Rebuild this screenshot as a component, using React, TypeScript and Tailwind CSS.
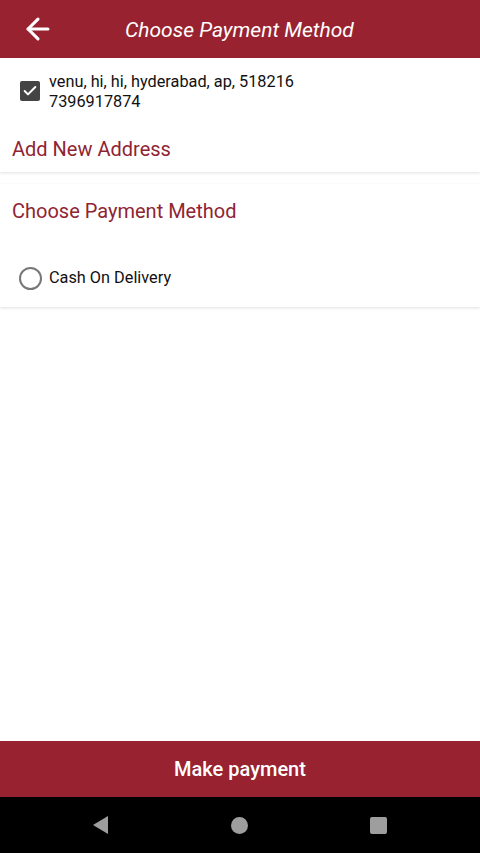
import { ArrowLeft, Check } from "lucide-react"

const App = () => {
  return (
    <div className="flex h-[853px] w-[480px] flex-col bg-white font-['Roboto',sans-serif]">
      {/* top bar */}
      <div className="flex h-[58px] shrink-0 items-center bg-[#982230] px-[21px]">
        <ArrowLeft className="h-[34px] w-[34px] text-white" strokeWidth={2.2} />
        <h1 className="ml-[70px] pt-[3px] text-[21px] italic text-white">Choose Payment Method</h1>
      </div>

      {/* address card */}
      <div className="bg-white shadow-[0_1px_3px_rgba(0,0,0,0.12)]">
        <div className="flex items-start gap-[9px] px-[20px] pt-[14px]">
          <div className="mt-[9px] flex h-[20px] w-[20px] shrink-0 items-center justify-center rounded-[2px] bg-[#444444]">
            <Check className="h-[16px] w-[16px] text-white" strokeWidth={3} />
          </div>
          <p className="text-[16.3px] leading-[20px] text-[#111]">
            venu, hi, hi, hyderabad, ap, 518216
            <br />
            7396917874
          </p>
        </div>
        <p className="px-[12px] pt-[26px] pb-[11px] text-[20px] leading-[23px] text-[#8f2433]">Add New Address</p>
      </div>

      <div className="h-[12px]" />

      {/* payment card */}
      <div className="bg-white pb-[17px] shadow-[0_1px_3px_rgba(0,0,0,0.12)]">
        <p className="px-[12px] pt-[16px] text-[20px] leading-[23px] text-[#8f2433]">Choose Payment Method</p>
        <div className="mt-[43px] flex items-center gap-[7px] px-[19px]">
          <div className="h-[23px] w-[23px] rounded-full border-2 border-[#777]" />
          <span className="text-[16.3px] text-[#111]">Cash On Delivery</span>
        </div>
      </div>

      <div className="flex-1" />

      {/* bottom button */}
      <button className="flex h-[56px] shrink-0 items-center justify-center bg-[#982230] text-[20px] font-medium text-white">
        Make payment
      </button>

      {/* system nav */}
      <div className="flex h-[56px] shrink-0 items-center gap-[122px] bg-black pl-[92px]">
        <svg width="17" height="20" viewBox="0 0 17 20">
          <path d="M16 1 L1 10 L16 19 Z" fill="#9e9e9e" />
        </svg>
        <div className="h-[17px] w-[17px] rounded-full bg-[#9e9e9e]" />
        <div className="h-[17px] w-[17px] rounded-[2px] bg-[#9e9e9e]" />
      </div>
    </div>
  )
}

export default App
